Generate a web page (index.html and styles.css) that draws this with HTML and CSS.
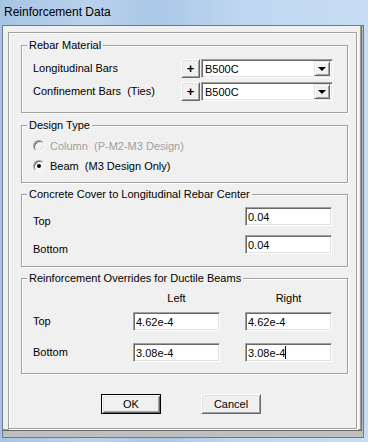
FILE: index.html
```html
<!DOCTYPE html>
<html lang="en">
<head>
    <meta charset="UTF-8">
    <meta name="viewport" content="width=device-width, initial-scale=1.0">
    <title>Reinforcement Data</title>
    <link rel="stylesheet" href="styles.css">
</head>
<body>
    <div class="window">
        <div class="titlebar">Reinforcement Data</div>
        <div class="client">
            <div class="panel">
                <div class="sheet">
                    <!-- Rebar Material -->
                    <div class="group group-rebar">
                        <span class="group-title">Rebar Material</span>
                        <div class="rebar-rows">
                            <span class="label">Longitudinal Bars</span>
                            <button class="btn plus">+</button>
                            <div class="combo"><span class="combo-text">B500C</span><span class="combo-arrow"></span></div>

                            <span class="label">Confinement Bars  (Ties)</span>
                            <button class="btn plus">+</button>
                            <div class="combo"><span class="combo-text">B500C</span><span class="combo-arrow"></span></div>
                        </div>
                    </div>

                    <!-- Design Type -->
                    <div class="group group-design">
                        <span class="group-title">Design Type</span>
                        <div class="radio-rows">
                            <label class="radio disabled"><span class="radio-dot"></span><span class="label">Column  (P-M2-M3 Design)</span></label>
                            <label class="radio checked"><span class="radio-dot"></span><span class="label">Beam  (M3 Design Only)</span></label>
                        </div>
                    </div>

                    <!-- Concrete Cover -->
                    <div class="group group-cover">
                        <span class="group-title">Concrete Cover to Longitudinal Rebar Center</span>
                        <div class="cover-rows">
                            <span class="label">Top</span>
                            <div class="field">0.04</div>
                            <span class="label">Bottom</span>
                            <div class="field">0.04</div>
                        </div>
                    </div>

                    <!-- Overrides -->
                    <div class="group group-overrides">
                        <span class="group-title">Reinforcement Overrides for Ductile Beams</span>
                        <div class="override-rows">
                            <span></span>
                            <span class="col-head">Left</span>
                            <span class="col-head">Right</span>

                            <span class="label">Top</span>
                            <div class="field">4.62e-4</div>
                            <div class="field">4.62e-4</div>

                            <span class="label">Bottom</span>
                            <div class="field">3.08e-4</div>
                            <div class="field">3.08e-4<span class="caret"></span></div>
                        </div>
                    </div>

                    <div class="buttons">
                        <button class="btn push default">OK</button>
                        <button class="btn push">Cancel</button>
                    </div>
                </div>
            </div>
        </div>
    </div>
</body>
</html>
```

FILE: styles.css
```css
/* Reinforcement Data dialog, Windows 7 classic look */
* {
    box-sizing: border-box;
}

body {
    margin: 0;
    font-family: "Liberation Sans", Arial, sans-serif;
    font-size: 11px;
    color: #000;
}

.window {
    width: 368px;
    height: 442px;
    display: flex;
    flex-direction: column;
    background: linear-gradient(90deg, #a8c4e4 0%, #b9d2ec 25%, #abc7e7 42%, #bed6f0 65%, #c7ddf3 100%);
}

.titlebar {
    height: 25px;
    padding: 5px 0 0 4px;
    font-size: 12px;
    line-height: 14px;
    color: #000;
}

.client {
    width: 362px;
    height: 413px;
    margin-left: 2px;
    border: 1px solid #6f7a87;
    background: #bfbfbf;
}

/* Поднятая панель */
.panel {
    width: 359px;
    height: 405px;
    background: #f0f0f0;
    border-right: 1px solid #696969;
    border-bottom: 1px solid #696969;
    box-shadow: inset -1px -1px #a0a0a0;
    padding: 6px 0 0 5px;
}

.sheet {
    width: 349px;
    height: 397px;
    border: 1px solid #a0a0a0;
    box-shadow: inset 1px 1px #fff, 1px 1px #fff;
}

/* Группы */
.group {
    width: 327px;
    margin-left: 12px;
    border: 1px solid #a0a0a0;
    box-shadow: inset 1px 1px #fff, 1px 1px #fff;
}

.group-title {
    display: block;
    width: fit-content;
    height: 13px;
    line-height: 13px;
    margin: -7px 0 0 5px;
    padding: 0 2px;
    background: #f0f0f0;
    white-space: pre;
}

.group-rebar {
    margin-top: 12px;
}

.group-design {
    margin-top: 12px;
}

.group-cover,
.group-overrides {
    margin-top: 11px;
}

.label {
    white-space: pre;
    line-height: 13px;
}

/* Rebar Material */
.rebar-rows {
    display: grid;
    grid-template-columns: 147px 19px 132px;
    grid-template-rows: 19px 19px;
    column-gap: 1px;
    row-gap: 4px;
    align-items: center;
    padding: 7px 0 11px 11px;
}

.combo {
    height: 19px;
    display: flex;
    align-items: center;
    background: #fff;
    border: 1px solid;
    border-color: #a0a0a0 #fff #fff #a0a0a0;
    box-shadow: inset 1px 1px #696969, inset -1px -1px #e3e3e3;
    padding: 2px 2px 2px 3px;
}

.combo-text {
    flex: 1;
}

.combo-arrow {
    width: 16px;
    height: 15px;
    background: #f0f0f0;
    border: 1px solid;
    border-color: #e3e3e3 #696969 #696969 #e3e3e3;
    box-shadow: inset 1px 1px #fff, inset -1px -1px #a0a0a0;
    display: flex;
    align-items: center;
    justify-content: center;
}

.combo-arrow::before {
    content: "";
    border-left: 4px solid transparent;
    border-right: 4px solid transparent;
    border-top: 4px solid #000;
    margin-top: 1px;
}

/* Кнопки */
.btn {
    font-family: inherit;
    font-size: 11px;
    color: #000;
    background: #f0f0f0;
    border: 1px solid;
    border-color: #fff #696969 #696969 #fff;
    box-shadow: inset 1px 1px #e3e3e3, inset -1px -1px #a0a0a0;
    padding: 0;
    margin: 0;
}

.plus {
    height: 19px;
    font-weight: bold;
    font-size: 13px;
    line-height: 15px;
}

.buttons {
    display: flex;
    gap: 40px;
    margin: 20px 0 0 92px;
}

.push {
    width: 60px;
    height: 20px;
}

.push.default {
    border: 1px solid #000;
    box-shadow: inset 1px 1px #fff, inset -1px -1px #696969, inset 2px 2px #e3e3e3, inset -2px -2px #a0a0a0;
}

/* Design Type */
.radio-rows {
    padding: 4px 0 6px 11px;
}

.radio {
    height: 20px;
    display: flex;
    align-items: center;
    gap: 5px;
}

.radio-dot {
    width: 12px;
    height: 12px;
    border-radius: 50%;
    background: #fff;
    border: 1px solid;
    border-color: #a0a0a0 #fff #fff #a0a0a0;
    box-shadow: inset 1px 1px #696969, inset -1px -1px #e3e3e3;
    display: flex;
    align-items: center;
    justify-content: center;
}

.radio.checked .radio-dot::before {
    content: "";
    width: 4px;
    height: 4px;
    border-radius: 50%;
    background: #000;
}

.radio.disabled .radio-dot {
    background: #f0f0f0;
}

.radio.disabled .label {
    color: #a0a0a0;
}

/* Поля ввода */
.field {
    height: 19px;
    background: #fff;
    border: 1px solid;
    border-color: #a0a0a0 #fff #fff #a0a0a0;
    box-shadow: inset 1px 1px #696969, inset -1px -1px #e3e3e3;
    padding: 0 2px;
    display: flex;
    align-items: center;
}

.caret {
    width: 1px;
    height: 13px;
    background: #000;
}

/* Concrete Cover */
.cover-rows {
    display: grid;
    grid-template-columns: 212px 87px;
    grid-template-rows: 19px 19px;
    row-gap: 9px;
    padding: 6px 0 12px 11px;
}

.cover-rows .label {
    padding-top: 8px;
}

/* Overrides */
.override-rows {
    display: grid;
    grid-template-columns: 75px 87px 87px;
    grid-template-rows: 14px 26px 31px;
    column-gap: 25px;
    align-items: end;
    padding: 6px 0 11px 11px;
}

.override-rows .label {
    line-height: 19px;
}

.col-head {
    text-align: center;
    line-height: 14px;
}
```
